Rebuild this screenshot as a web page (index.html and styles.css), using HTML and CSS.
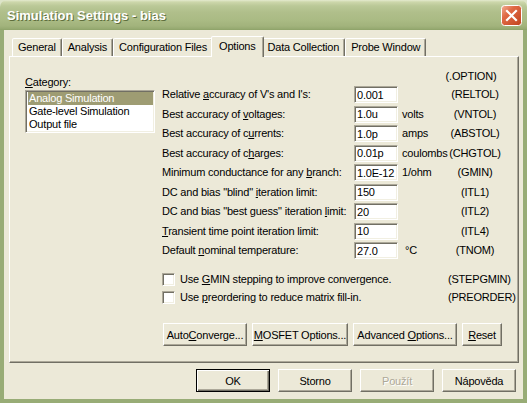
FILE: index.html
```html
<!DOCTYPE html>
<html>
<head>
<meta charset="utf-8">
<title>Simulation Settings - bias</title>
<link rel="stylesheet" href="styles.css">
</head>
<body>
<div class="window">
  <div class="titlebar">
    <span class="title">Simulation Settings - bias</span>
    <button class="close" aria-label="Close">
      <svg width="21" height="21" viewBox="0 0 21 21">
        <defs>
          <linearGradient id="cg" x1="0" y1="0" x2="1" y2="1">
            <stop offset="0" stop-color="#f2b198"/>
            <stop offset="0.35" stop-color="#e06a45"/>
            <stop offset="1" stop-color="#c0421d"/>
          </linearGradient>
        </defs>
        <rect x="0.5" y="0.5" width="20" height="20" rx="3" fill="url(#cg)" stroke="#fff"/>
        <path d="M6 6 L15 15 M15 6 L6 15" stroke="#fff" stroke-width="2.2" stroke-linecap="square"/>
      </svg>
    </button>
  </div>
  <div class="dialog">
    <div class="tabs">
      <div class="tab">General</div>
      <div class="tab">Analysis</div>
      <div class="tab">Configuration Files</div>
      <div class="tab active">Options</div>
      <div class="tab">Data Collection</div>
      <div class="tab">Probe Window</div>
    </div>
    <div class="panel">
      <div class="category">
        <div class="category-label"><u>C</u>ategory:</div>
        <div class="listbox">
          <div class="item selected">Analog Simulation</div>
          <div class="item">Gate-level Simulation</div>
          <div class="item">Output file</div>
        </div>
      </div>
      <div class="options">
        <div class="opt-head"><span class="code">(.OPTION)</span></div>
        <div class="params">
          <span class="label">Relative <u>a</u>ccuracy of V's and I's:</span>
          <input class="field" type="text" value="0.001">
          <span class="unit"></span>
          <span class="code">(RELTOL)</span>

          <span class="label">Best accuracy of <u>v</u>oltages:</span>
          <input class="field" type="text" value="1.0u">
          <span class="unit">volts</span>
          <span class="code">(VNTOL)</span>

          <span class="label">Best accuracy of c<u>u</u>rrents:</span>
          <input class="field" type="text" value="1.0p">
          <span class="unit">amps</span>
          <span class="code">(ABSTOL)</span>

          <span class="label">Best accuracy of c<u>h</u>arges:</span>
          <input class="field" type="text" value="0.01p">
          <span class="unit">coulombs</span>
          <span class="code">(CHGTOL)</span>

          <span class="label">Minimum conductance for any <u>b</u>ranch:</span>
          <input class="field" type="text" value="1.0E-12">
          <span class="unit">1/ohm</span>
          <span class="code">(GMIN)</span>

          <span class="label">DC and bias "blind" <u>i</u>teration limit:</span>
          <input class="field" type="text" value="150">
          <span class="unit"></span>
          <span class="code">(ITL1)</span>

          <span class="label">DC and bias "best guess" iteration <u>l</u>imit:</span>
          <input class="field" type="text" value="20">
          <span class="unit"></span>
          <span class="code">(ITL2)</span>

          <span class="label"><u>T</u>ransient time point iteration limit:</span>
          <input class="field" type="text" value="10">
          <span class="unit"></span>
          <span class="code">(ITL4)</span>

          <span class="label">Default <u>n</u>ominal temperature:</span>
          <input class="field" type="text" value="27.0">
          <span class="unit unit-deg">°C</span>
          <span class="code">(TNOM)</span>
        </div>
        <div class="checks">
          <div class="check">
            <label class="check-label"><input class="box" type="checkbox"><span>Use <u>G</u>MIN stepping to improve convergence.</span></label>
            <span class="code">(STEPGMIN)</span>
          </div>
          <div class="check">
            <label class="check-label"><input class="box" type="checkbox"><span>Use <u>p</u>reordering to reduce matrix fill-in.</span></label>
            <span class="code">(PREORDER)</span>
          </div>
        </div>
        <div class="actions">
          <button class="btn btn-auto">Auto<u>C</u>onverge...</button>
          <button class="btn btn-mosfet"><u>M</u>OSFET Options...</button>
          <button class="btn btn-adv">Advanced <u>O</u>ptions...</button>
          <button class="btn btn-reset"><u>R</u>eset</button>
        </div>
      </div>
    </div>
    <div class="footer">
      <button class="btn default">OK</button>
      <button class="btn">Storno</button>
      <button class="btn" disabled>Použít</button>
      <button class="btn">Nápověda</button>
    </div>
  </div>
</div>
</body>
</html>
```

FILE: styles.css
```css
* { box-sizing: border-box; }

html, body {
  margin: 0;
  padding: 0;
}

body {
  width: 527px;
  height: 403px;
  overflow: hidden;
  background: #dde4c8;
  font-family: "Liberation Sans", Arial, sans-serif;
  font-size: 11px;
  letter-spacing: -0.2px;
  line-height: 13px;
  color: #000;
}

.window {
  width: 527px;
  height: 403px;
  display: flex;
  flex-direction: column;
}

/* ---------- title bar ---------- */
.titlebar {
  height: 30px;
  flex: none;
  display: flex;
  align-items: center;
  justify-content: space-between;
  padding: 0 5px 0 7px;
  border-radius: 7px 7px 0 0;
  background: linear-gradient(to bottom,
    #e4eacf 0px, #cdd7ab 2px, #bac897 6px, #b0bf8b 12px,
    #aabb84 20px, #a2b37c 26px, #95a970 29px, #8ca167 30px);
}

.title {
  color: #fff;
  font-weight: bold;
  font-size: 13px;
  letter-spacing: 0;
  text-shadow: 1px 1px 0 #5e6e3d;
  margin-top: 1px;
}

.close {
  width: 21px;
  height: 21px;
  padding: 0;
  border: 0;
  background: none;
  display: block;
  margin-top: 1px;
}

.close svg { display: block; }

/* ---------- dialog body ---------- */
.dialog {
  flex: 1;
  display: flex;
  flex-direction: column;
  background: #ece9d8;
  border: 4px solid #98ac76;
  border-top: 0;
}

.tabs {
  flex: none;
  height: 26px;
  display: flex;
  align-items: flex-end;
  padding: 6px 0 0 8px;
}

.tab {
  height: 18px;
  padding: 0 5px;
  display: flex;
  align-items: center;
  white-space: nowrap;
  background: #ece9d8;
  border: 1px solid;
  border-bottom: 0;
  border-color: #fff #716f64 transparent #fff;
  border-radius: 2px 2px 0 0;
  box-shadow: inset -1px 0 0 #aca899;
}

.tab.active {
  height: 21px;
  margin: 0 -2px -1px;
  padding: 0 7px 2px;
  position: relative;
  z-index: 1;
}

.panel {
  flex: none;
  height: 307px;
  margin: 0 4px 0 5px;
  display: flex;
  border: 1px solid;
  border-color: #fff #716f64 #716f64 #fff;
  box-shadow: inset -1px -1px 0 #aca899;
}

/* ---------- category list ---------- */
.category {
  width: 130px;
  margin-left: 15px;
  padding-top: 19px;
}

.category-label { line-height: 13px; }

.listbox {
  margin-top: 1px;
  height: 43px;
  padding: 1px;
  background: #fff;
  border: 1px solid;
  border-color: #aca899 #fff #fff #aca899;
  box-shadow: inset 1px 1px 0 #716f64, inset -1px -1px 0 #f1efe2;
}

.item {
  height: 13px;
  line-height: 13px;
  padding-left: 1px;
  margin-left: 1px;
  white-space: nowrap;
}

.item.selected {
  background: #9e9c73;
  color: #fff;
}

/* ---------- options ---------- */
.options {
  width: 340px;
  margin-left: 7px;
  padding-top: 13px;
}

.opt-head {
  display: flex;
  justify-content: flex-end;
  padding-right: 4px;
}

.code {
  width: 54px;
  text-align: center;
  white-space: nowrap;
}

.params {
  margin-top: 3px;
  display: grid;
  grid-template-columns: 192px 44px 50px 54px;
  grid-auto-rows: 17px;
  row-gap: 2.5px;
  align-items: center;
}

.label { white-space: nowrap; }

.field {
  width: 44px;
  height: 17px;
  margin: 0;
  padding: 1px 2px;
  font-family: inherit;
  font-size: 11px;
  letter-spacing: -0.2px;
  color: #000;
  background: #fff;
  border: 1px solid;
  border-color: #aca899 #fff #fff #aca899;
  box-shadow: inset 1px 1px 0 #716f64, inset -1px -1px 0 #f1efe2;
  outline: none;
}

.unit {
  padding-left: 4px;
  white-space: nowrap;
}

.unit-deg { padding-left: 7px; }

.checks { margin-top: 11px; }

.check {
  height: 18px;
  display: grid;
  grid-template-columns: 286px 54px;
  align-items: center;
}

.check-label {
  display: flex;
  align-items: center;
  gap: 5px;
  white-space: nowrap;
}

.box {
  appearance: none;
  -webkit-appearance: none;
  width: 13px;
  height: 13px;
  margin: 0;
  background: #fff;
  border: 1px solid;
  border-color: #aca899 #fff #fff #aca899;
  box-shadow: inset 1px 1px 0 #716f64, inset -1px -1px 0 #f1efe2;
}

.actions {
  margin-top: 17px;
  padding-left: 1px;
  display: flex;
  gap: 5px;
}

/* ---------- buttons ---------- */
.btn {
  height: 23px;
  padding: 0;
  font-family: inherit;
  font-size: 11px;
  letter-spacing: -0.2px;
  color: #000;
  text-align: center;
  background: #ece9d8;
  border: 1px solid;
  border-color: #fff #716f64 #716f64 #fff;
  box-shadow: inset -1px -1px 0 #aca899;
  white-space: nowrap;
}

.btn-auto { width: 84px; }
.btn-mosfet { width: 96px; }
.btn-adv { width: 104px; }
.btn-reset { width: 40px; }

.footer {
  margin-top: 6px;
  padding-right: 7px;
  display: flex;
  justify-content: flex-end;
  gap: 8px;
}

.footer .btn { width: 74px; }

.btn.default {
  border-color: #000;
  box-shadow: inset 1px 1px 0 #fff, inset -1px -1px 0 #716f64, inset -2px -2px 0 #aca899;
}

.btn:disabled {
  color: #aca899;
  text-shadow: 1px 1px 0 #fff;
}
```
